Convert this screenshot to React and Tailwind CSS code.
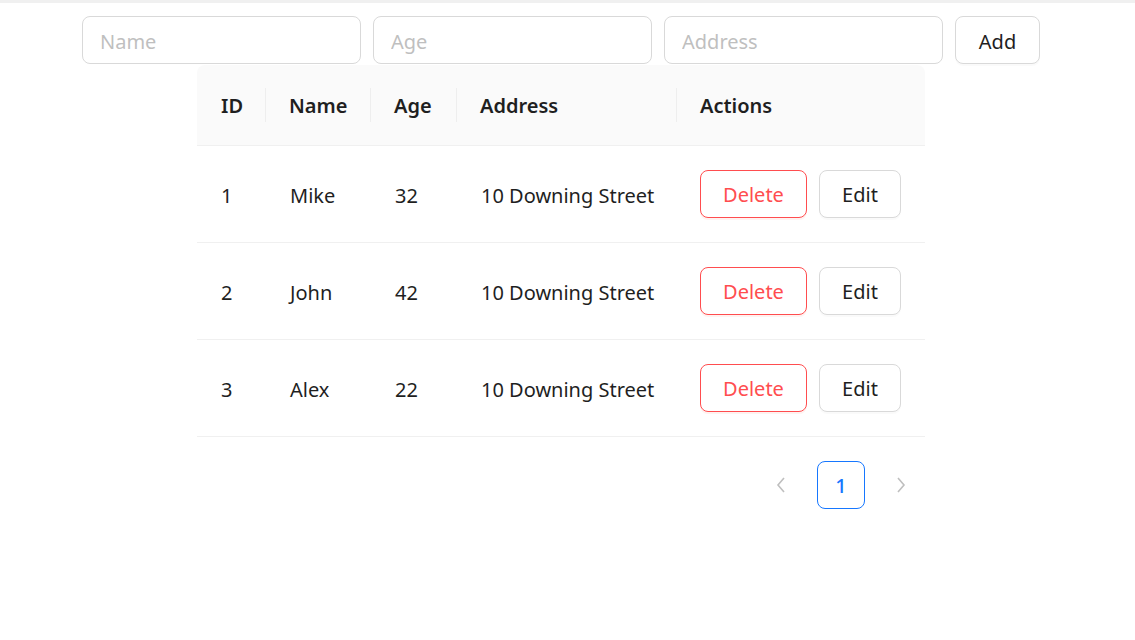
import React from 'react';

const rows = [
  { id: 1, name: 'Mike', age: 32, address: '10 Downing Street' },
  { id: 2, name: 'John', age: 42, address: '10 Downing Street' },
  { id: 3, name: 'Alex', age: 22, address: '10 Downing Street' },
];

const cols = [
  { title: 'ID', w: 'w-[68px]' },
  { title: 'Name', w: 'w-[105px]' },
  { title: 'Age', w: 'w-[86px]' },
  { title: 'Address', w: 'w-[220px]' },
  { title: 'Actions', w: 'w-[249px]' },
];

export default function App() {
  return (
    <div className="min-h-screen bg-white text-[20px] text-[#1f1f1f]" style={{ fontFamily: '"Noto Sans", "Open Sans", sans-serif' }}>
      <div className="h-[3px] bg-[#f0f0f0]" />
      <div className="w-[1122px] flex flex-col items-center pt-[13px]">
        {/* form */}
        <div className="flex gap-[12px]">
          {['Name', 'Age', 'Address'].map((p) => (
            <input
              key={p}
              placeholder={p}
              className="w-[279px] h-[48px] px-[17px] pt-[2px] rounded-[8px] border border-[#d9d9d9] outline-none placeholder:text-[#bfbfbf] text-[20px]"
            />
          ))}
          <button className="w-[85px] h-[48px] pt-[3px] rounded-[8px] border border-[#d9d9d9] bg-white shadow-[0_2px_0_rgba(0,0,0,0.02)]">
            Add
          </button>
        </div>

        {/* table */}
        <div className="w-[728px] mt-[1px]">
          <div className="flex h-[81px] bg-[#fafafa] rounded-t-[8px] border-b border-[#f0f0f0]">
            {cols.map((c, i) => (
              <div key={c.title} className={`${c.w} relative flex items-center px-[24px] pt-[1px] font-semibold`}>
                {i > 0 && <span className="absolute left-0 top-1/2 -translate-y-1/2 h-[34px] w-px bg-[#eeeeee]" />}
                {c.title}
              </div>
            ))}
          </div>
          {rows.map((r) => (
            <div key={r.id} className="flex h-[97px] border-b border-[#f0f0f0]">
              <div className="w-[68px] flex items-center px-[24px] pt-[3px]">{r.id}</div>
              <div className="w-[105px] flex items-center px-[25px] pt-[3px]">{r.name}</div>
              <div className="w-[86px] flex items-center px-[25px] pt-[3px]">{r.age}</div>
              <div className="w-[220px] flex items-center px-[25px] pt-[3px] whitespace-nowrap">{r.address}</div>
              <div className="w-[249px] flex items-center gap-[12px] px-[24px]">
                <button className="w-[107px] h-[48px] pt-[2px] rounded-[8px] border border-[#ff4d4f] text-[#ff4d4f] bg-white shadow-[0_2px_0_rgba(255,38,5,0.06)]">
                  Delete
                </button>
                <button className="w-[82px] h-[48px] pt-[2px] rounded-[8px] border border-[#d9d9d9] bg-white shadow-[0_2px_0_rgba(0,0,0,0.02)]">
                  Edit
                </button>
              </div>
            </div>
          ))}

          {/* pagination */}
          <div className="flex justify-end gap-[12px] mt-[24px]">
            <div className="w-[48px] h-[48px] flex items-center justify-center">
              <svg width="10" height="16" viewBox="0 0 10 16" fill="none" stroke="#bfbfbf" strokeWidth="1.6">
                <path d="M8 1 L2 8 L8 15" />
              </svg>
            </div>
            <div className="w-[48px] h-[48px] flex items-center justify-center pt-[1px] rounded-[8px] border border-[#1677ff] text-[#1677ff] font-medium">
              1
            </div>
            <div className="w-[48px] h-[48px] flex items-center justify-center">
              <svg width="10" height="16" viewBox="0 0 10 16" fill="none" stroke="#bfbfbf" strokeWidth="1.6">
                <path d="M2 1 L8 8 L2 15" />
              </svg>
            </div>
          </div>
        </div>
      </div>
    </div>
  );
}
